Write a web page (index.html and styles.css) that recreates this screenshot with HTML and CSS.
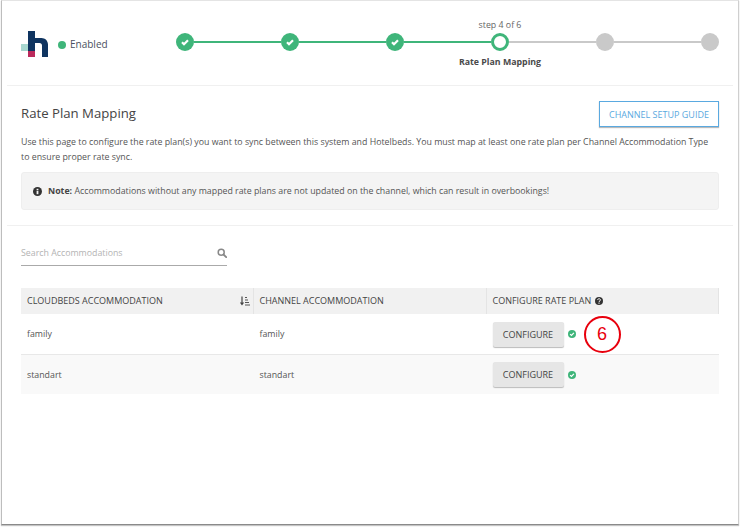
FILE: index.html
```html
<!DOCTYPE html>
<html lang="en">
<head>
<meta charset="utf-8">
<title>Rate Plan Mapping</title>
<link rel="stylesheet" href="styles.css">
</head>
<body>
<div class="frame">
  <header class="top">
    <div class="brand">
      <svg class="logo" width="28" height="28" viewBox="0 0 28 28">
        <rect x="0" y="13" width="7" height="7" fill="#a9d8d0"/>
        <rect x="7" y="0" width="7" height="20" fill="#0f3460"/>
        <rect x="7" y="20" width="7" height="6" fill="#bb2a5c"/>
        <path d="M14 7h6.500c3.500 0 6.500 2.800 6.500 6.500V26h-6V14.500c0-1.500-1-2.500-2.500-2.500H14z" fill="#0f3460"/>
      </svg>
      <span class="dot"></span>
      <span class="status">Enabled</span>
    </div>
    <div class="stepper">
      <span class="step done"><svg width="18" height="18" viewBox="0 0 18 18"><path class="tick" d="M6 9.200l2 2 4-4"/></svg></span>
      <span class="link on"></span>
      <span class="step done"><svg width="18" height="18" viewBox="0 0 18 18"><path class="tick" d="M6 9.200l2 2 4-4"/></svg></span>
      <span class="link on"></span>
      <span class="step done"><svg width="18" height="18" viewBox="0 0 18 18"><path class="tick" d="M6 9.200l2 2 4-4"/></svg></span>
      <span class="link on"></span>
      <span class="step current">
        <span class="step-count">step 4 of 6</span>
        <span class="step-name">Rate Plan Mapping</span>
      </span>
      <span class="link"></span>
      <span class="step todo"></span>
      <span class="link"></span>
      <span class="step todo"></span>
    </div>
  </header>

  <section class="intro">
    <div class="title-row">
      <h1>Rate Plan Mapping</h1>
      <a class="guide" href="#">CHANNEL SETUP GUIDE</a>
    </div>
    <p class="lead">Use this page to configure the rate plan(s) you want to sync between this system and Hotelbeds. You must map at least one rate plan per Channel Accommodation Type to ensure proper rate sync.</p>
    <div class="note">
      <svg class="note-icon" width="9" height="9" viewBox="0 0 10 10"><circle cx="5" cy="5" r="5" fill="#333"/><rect x="4" y="4.200" width="2" height="3.800" fill="#f4f4f4"/><rect x="4" y="2" width="2" height="1.500" fill="#f4f4f4"/></svg>
      <span><b>Note:</b> Accommodations without any mapped rate plans are not updated on the channel, which can result in overbookings!</span>
    </div>
  </section>

  <section class="listing">
    <div class="search">
      <span>Search Accommodations</span>
      <svg width="10" height="10" viewBox="0 0 10 10"><circle cx="4.200" cy="4.200" r="3" fill="none" stroke="#888" stroke-width="1.500"/><path d="M6.500 6.500L9.200 9.200" stroke="#888" stroke-width="1.800" stroke-linecap="round"/></svg>
    </div>
    <div class="table">
      <div class="row head">
        <div class="cell sortable">CLOUDBEDS ACCOMMODATION
          <svg width="10" height="10" viewBox="0 0 10 10"><path d="M2 0.500V8M0.500 6.500L2 8.500L3.500 6.500" fill="none" stroke="#444" stroke-width="1.200"/><path d="M5 1.500h2M5 4h3M5 6.500h4M5 9h5" stroke="#555" stroke-width="1"/></svg>
        </div>
        <div class="cell">CHANNEL ACCOMMODATION</div>
        <div class="cell help">CONFIGURE RATE PLAN
          <svg width="8" height="8" viewBox="0 0 10 10"><circle cx="5" cy="5" r="5" fill="#333"/><path d="M3.300 3.800c0-2.200 3.500-2.200 3.500-.1 0 1.300-1.800 1.200-1.800 2.500" fill="none" stroke="#fff" stroke-width="1.200"/><rect x="4.300" y="7" width="1.400" height="1.400" fill="#fff"/></svg>
        </div>
      </div>
      <div class="row">
        <div class="cell">family</div>
        <div class="cell">family</div>
        <div class="cell action">
          <button class="configure" type="button">CONFIGURE</button>
          <svg width="8" height="8" viewBox="0 0 10 10"><circle cx="5" cy="5" r="5" fill="#3fb57a"/><path d="M2.600 5.200l1.700 1.600 3.100-3.200" fill="none" stroke="#fff" stroke-width="1.500"/></svg>
          <span class="callout">6</span>
        </div>
      </div>
      <div class="row alt">
        <div class="cell">standart</div>
        <div class="cell">standart</div>
        <div class="cell action">
          <button class="configure" type="button">CONFIGURE</button>
          <svg width="8" height="8" viewBox="0 0 10 10"><circle cx="5" cy="5" r="5" fill="#3fb57a"/><path d="M2.600 5.200l1.700 1.600 3.100-3.200" fill="none" stroke="#fff" stroke-width="1.500"/></svg>
        </div>
      </div>
    </div>
  </section>
</div>
</body>
</html>
```

FILE: styles.css
```css
* { box-sizing: border-box; }
html, body { margin: 0; padding: 0; background: #fff; }
body { width: 740px; height: 527px; overflow: hidden; font-family: "Open Sans", sans-serif; color: #555; }

.frame {
  width: 738px;
  height: 525px;
  margin-left: 1px;
  border-top: 1px solid #e4e4e4;
  border-left: 1px solid #bdbdbd;
  border-right: 1px solid #cfcfcf;
  border-bottom: 1px solid #8a8a8a;
  box-shadow: 0 1px 1px #c4c4c4;
  padding: 0 5px;
}

.top {
  height: 85px;
  border-bottom: 1px solid #f0f0f0;
  display: flex;
  align-items: flex-start;
  padding: 30px 0 0 14px;
}
.brand { width: 155px; display: flex; align-items: center; height: 28px; }
.logo { flex: none; }
.dot { width: 8px; height: 8px; border-radius: 50%; background: #3fb57a; margin-left: 9px; margin-top: -1px; }
.status { font-size: 10px; color: #4a5060; margin-left: 4px; margin-top: -2px; }

.stepper { display: flex; align-items: center; margin-top: 2px; }
.step { position: relative; flex: none; width: 18px; height: 18px; border-radius: 50%; display: block; }
.step svg { display: block; }
.done { background: #3fb57a; }
.tick { fill: none; stroke: #fff; stroke-width: 2.200; }
.current { background: #fff; border: 3px solid #3fb57a; }
.todo { background: #c9c9c9; }
.link { flex: none; width: 87px; height: 2px; background: #c9c9c9; }
.link.on { background: #3fb57a; }
.step-count, .step-name { position: absolute; left: 50%; transform: translateX(-50%); white-space: nowrap; }
.step-count { top: -17px; font-size: 8.800px; color: #666; }
.step-name { top: 20px; font-size: 8.800px; font-weight: 700; color: #4a4a4a; }

.intro { padding: 15px 14px 15px; border-bottom: 1px solid #f0f0f0; }
.title-row { display: flex; justify-content: space-between; align-items: center; height: 26px; }
h1 { margin: 0 0 2px; font-size: 13.200px; font-weight: 400; color: #444; }
.guide {
  width: 120px;
  height: 26px;
  border: 1px solid #5aa9e0;
  box-shadow: 0 1px 1px #bbb;
  color: #5aa9e0;
  font-size: 9px;
  text-decoration: none;
  display: flex;
  align-items: center;
  justify-content: center;
}
.lead { margin: 8px 0 0; padding-right: 5px; font-size: 8.800px; line-height: 15px; color: #555; }
.note {
  margin-top: 7px;
  height: 38px;
  background: #f4f4f4;
  border-radius: 3px;
  border: 1px solid #eee;
  display: flex;
  align-items: center;
  gap: 6px;
  padding-left: 11px;
  font-size: 8.800px;
  color: #555;
}
.note b { font-weight: 700; color: #444; }
.note-icon { flex: none; }

.listing { padding: 0 14px; }
.search {
  margin-top: 16px;
  width: 206px;
  height: 24px;
  padding-bottom: 2px;
  border-bottom: 1px solid #aaa;
  display: flex;
  align-items: center;
  justify-content: space-between;
  font-size: 8.800px;
  color: #b3b3b3;
}

.table { margin-top: 22px; }
.row { display: grid; grid-template-columns: 232.500px 233px 1fr; height: 41px; border-bottom: 1px solid #e8e8e8; align-items: center; }
.row.alt { height: 39px; background: #f9f9f9; border-bottom: 0; }
.row.head { height: 26px; background: #f1f1f1; border-bottom: 0; color: #444; }
.cell { font-size: 8.800px; padding-left: 6px; display: flex; align-items: center; }
.head .cell { height: 26px; font-size: 9px; padding-bottom: 1px; border-right: 1px solid #e4e4e4; }
.sortable { justify-content: space-between; padding-right: 3px; }
.help { gap: 4px; }
.action { position: relative; gap: 4px; }
.configure {
  width: 71px;
  height: 25px;
  border: 0;
  border-radius: 2px;
  background: #e6e6e6;
  box-shadow: 0 1px 1px #bbb;
  font: 400 9px "Open Sans", sans-serif;
  color: #444;
  padding: 0;
}
.callout {
  position: absolute;
  left: 97px;
  top: -6px;
  width: 37px;
  height: 37px;
  border: 2px solid #e8000d;
  border-radius: 50%;
  color: #e8000d;
  font: 18px/33px "Liberation Sans", sans-serif;
  text-align: center;
}
```
